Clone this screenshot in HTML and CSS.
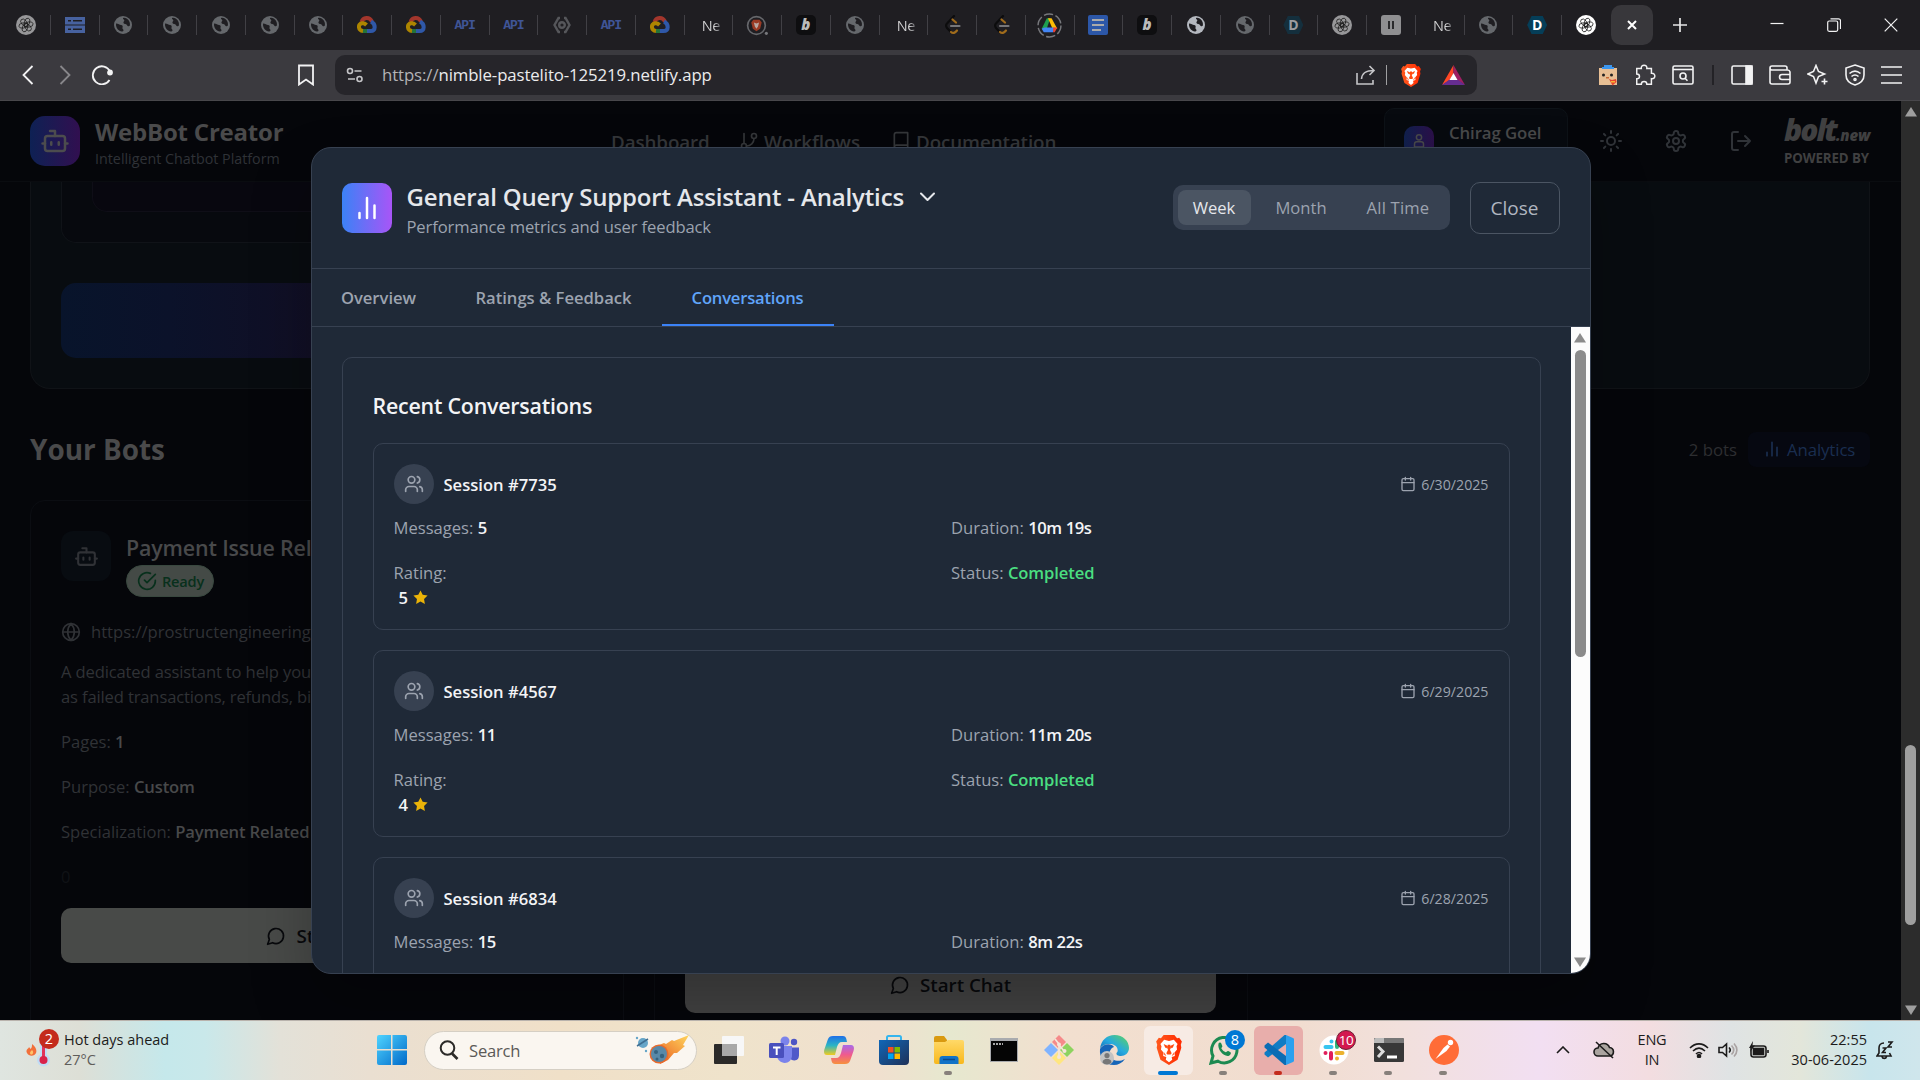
FILE: index.html
```html
<!DOCTYPE html>
<html lang="en">
<head>
<meta charset="UTF-8" />
<meta name="viewport" content="width=device-width, initial-scale=1" />
<title>WebBot Creator</title>
<link rel="stylesheet" href="styles.css">
</head>
<body>

<!-- icon definitions -->
<svg class="defs" width="0" height="0">
  <defs>
    <linearGradient id="g-win" x1="0" y1="0" x2="1" y2="1"><stop offset="0" stop-color="#4fd4ff"/><stop offset="1" stop-color="#0069c9"/></linearGradient>
    <linearGradient id="g-store" x1="0" y1="0" x2="1" y2="1"><stop offset="0" stop-color="#1067b8"/><stop offset="1" stop-color="#1f3158"/></linearGradient>
    <linearGradient id="g-folder" x1="0" y1="0" x2="0" y2="1"><stop offset="0" stop-color="#ffd968"/><stop offset="1" stop-color="#f8b81c"/></linearGradient>
    <linearGradient id="g-edge" x1="0" y1="1" x2="1" y2="0"><stop offset="0" stop-color="#0c59a4"/><stop offset=".5" stop-color="#26a9e0"/><stop offset="1" stop-color="#5fd65a"/></linearGradient>
    <linearGradient id="g-cop1" x1="0" y1="0" x2="0" y2="1"><stop offset="0" stop-color="#1f6fe8"/><stop offset=".5" stop-color="#2bb5c4"/><stop offset="1" stop-color="#f2cc1e"/></linearGradient>
    <linearGradient id="g-cop2" x1="0" y1="0" x2="0" y2="1"><stop offset="0" stop-color="#a86bea"/><stop offset=".5" stop-color="#ef5a8f"/><stop offset="1" stop-color="#f7913c"/></linearGradient>
    <linearGradient id="g-comet" x1="0" y1="1" x2="1" y2="0"><stop offset="0" stop-color="#e8531b"/><stop offset="1" stop-color="#ffd75e"/></linearGradient>
    <linearGradient id="g-brave" x1="0" y1="0" x2="1" y2="0"><stop offset="0" stop-color="#ff5a1f"/><stop offset="1" stop-color="#ff2a00"/></linearGradient>
  </defs>

  <symbol id="openai" viewBox="0 0 20 20">
    <circle cx="10" cy="10" r="10" fill="currentColor"/>
    <g fill="none" stroke="#222" stroke-width=".8"><ellipse cx="10" cy="7.2" rx="2.6" ry="4.4" transform="rotate(20 10 10)"/><ellipse cx="10" cy="7.2" rx="2.6" ry="4.4" transform="rotate(80 10 10)"/><ellipse cx="10" cy="7.2" rx="2.6" ry="4.4" transform="rotate(140 10 10)"/><ellipse cx="10" cy="7.2" rx="2.6" ry="4.4" transform="rotate(200 10 10)"/><ellipse cx="10" cy="7.2" rx="2.6" ry="4.4" transform="rotate(260 10 10)"/><ellipse cx="10" cy="7.2" rx="2.6" ry="4.4" transform="rotate(320 10 10)"/></g>
  </symbol>
  <symbol id="rack" viewBox="0 0 20 20">
    <path fill="#47629f" d="M0 2h20v7.500H0zM0 10.500h20V18H0z"/><path stroke="#1f1e22" stroke-width="1.600" d="M3 5.700h3M8 5.700h9M3 14.300h3M8 14.300h9"/>
  </symbol>
  <symbol id="earth" viewBox="0 0 20 20">
    <circle cx="10" cy="10" r="9" fill="currentColor"/>
    <path fill="#1f1e22" d="M3 8.500c2.500 0 3.500 1.500 5 1.500s2 1 1.500 2.500 1 1.500 1 3c-.5 1.300-2.500 1.200-4 .3C4 14.300 2.700 11.500 3 8.500zM10 3c2-.6 4.600.6 5.800 2.600 1 1.500 1.300 3 1.100 4.900-1 1.500-2.400.7-3-.6-.6-1.200-2.900-.5-3.400-1.900-.4-1.400 1-1.700.8-2.700C11.200 4.300 9.600 4 10 3z"/>
  </symbol>
  <symbol id="gcp" viewBox="0 0 20 20">
    <g fill="none" stroke-width="4"><path stroke="#a3362c" d="M4.500 7C6 2 12.500 1.300 15 6.500"/><path stroke="#2f58a8" d="M14 6.500c5 2.500 5 9.500-.5 9.500H10"/><path stroke="#23733a" d="M10 16H5.500"/><path stroke="#ad8500" d="M6 16C1 15.500.5 9 5 8.300c2-.3 3.500.7 4.500 1.700"/></g>
  </symbol>
  <symbol id="hexa" viewBox="0 0 20 20">
    <g fill="none" stroke="#55565a" stroke-width="2.400"><path d="M8 3H6.500L2.500 10l4 7H8M12 3h1.500l4 7-4 7H12"/><circle cx="10" cy="10" r="2.800"/></g>
  </symbol>
  <symbol id="leet" viewBox="0 0 20 20">
    <g fill="none" stroke-linecap="round" stroke-width="2.200"><path stroke="#0c0c0d" d="M12 1L5 8.500c-1 1-1 3 0 4.500l4 4"/><path stroke="#a06c1c" d="M10.500 4.500l3.500 3M9 17c2 1.800 4 1 6-1.500"/><path stroke="#77777a" d="M9 11h8.500"/></g>
  </symbol>
  <symbol id="drive" viewBox="0 0 24 24">
    <circle cx="12" cy="12" r="11" fill="none" stroke="#77787c" stroke-width="1.400" stroke-dasharray="9 2.500"/>
    <path fill="#1e9e50" d="M9.500 5h3.200L8.500 17.500 4.500 15z"/><path fill="#fbbc04" d="M10.500 5h3.500l5.500 10h-4.500z"/><path fill="#4285f4" d="M7.300 14H17l-1.500 4.500H6.500l-2-3.500z"/><path fill="#ea4335" d="M15.500 14h4l-2.500 4.500h-1.500z"/>
  </symbol>
  <symbol id="docs" viewBox="0 0 20 20">
    <rect width="20" height="20" rx="2" fill="#2c57a8"/><path stroke="#aaa" stroke-width="2" d="M4 5h12M4 10h12M4 15h9"/>
  </symbol>
  <symbol id="lion" viewBox="0 0 24 28">
    <path fill="url(#g-brave)" d="M7 0h10l2.500 3 2-.5L24 6l-1 3 .5 3-3.500 11-8 5-8-5L.5 12 1 9 0 6l2.500-3.500 2 .5z"/>
    <path fill="#fff" d="M7.500 4.500l4.500 1 4.500-1 3.500 4-1 2 .5 3-2.500 3 .5 3-3 1 .5 2.500-3 2.500-3-2.500.5-2.500-3-1 .5-3-2.500-3 .5-3-1-2z"/>
    <path fill="#ff4a10" d="M7 8.500l3.500 1.500.5 4-1.500 3 1 1.200h3l1-1.200-1.500-3 .5-4L17 8.500l-1.500 3.500L14.500 12l-1 1-.3-4h-2.400l-.3 4-1-1-1 0zM7.500 16l2 3.500-2-1zM16.500 16l-2 3.500 2-1z"/>
  </symbol>
  <symbol id="robot" viewBox="0 0 24 24"><path d="M12 8V4H8"/><rect width="16" height="12" x="4" y="8" rx="2"/><path d="M2 14h2M20 14h2M15 13v2M9 13v2"/></symbol>
  <symbol id="bars" viewBox="0 0 24 24"><path d="M18 20V10M12 20V4M6 20v-4"/></symbol>
  <symbol id="users" viewBox="0 0 24 24"><path d="M16 21v-2a4 4 0 0 0-4-4H6a4 4 0 0 0-4 4v2"/><circle cx="9" cy="7" r="4"/><path d="M22 21v-2a4 4 0 0 0-3-3.870M16 3.130a4 4 0 0 1 0 7.750"/></symbol>
  <symbol id="calendar" viewBox="0 0 24 24"><rect width="18" height="18" x="3" y="4" rx="2"/><path d="M8 2v4M16 2v4M3 10h18"/></symbol>
  <symbol id="star" viewBox="0 0 24 24"><path d="M12 2l3.090 6.260L22 9.270l-5 4.870 1.180 6.880L12 17.770l-6.180 3.250L7 14.140 2 9.270l6.910-1.010z"/></symbol>
  <symbol id="chat" viewBox="0 0 24 24"><path d="M7.900 20A9 9 0 1 0 4 16.100L2 22Z"/></symbol>
  <symbol id="globe" viewBox="0 0 24 24"><circle cx="12" cy="12" r="10"/><path d="M12 2a14.500 14.500 0 0 0 0 20 14.500 14.500 0 0 0 0-20M2 12h20"/></symbol>
</svg>

<!-- browser tabs -->
<div class="tabstrip">
  <div class="tab dim"><svg><use href="#openai"/></svg></div>
  <div class="tab"><svg><use href="#rack"/></svg></div>
  <div class="tab gray"><svg><use href="#earth"/></svg></div>
  <div class="tab gray"><svg><use href="#earth"/></svg></div>
  <div class="tab gray"><svg><use href="#earth"/></svg></div>
  <div class="tab gray"><svg><use href="#earth"/></svg></div>
  <div class="tab gray"><svg><use href="#earth"/></svg></div>
  <div class="tab"><svg><use href="#gcp"/></svg></div>
  <div class="tab"><svg><use href="#gcp"/></svg></div>
  <div class="tab api">API</div>
  <div class="tab api">API</div>
  <div class="tab"><svg><use href="#hexa"/></svg></div>
  <div class="tab api">API</div>
  <div class="tab"><svg><use href="#gcp"/></svg></div>
  <div class="tab ne">Ne</div>
  <div class="tab"><svg class="lion-tab" viewBox="0 0 24 24"><circle cx="11" cy="12" r="8.500" fill="none" stroke="#66676b" stroke-width="1.600"/><path fill="#9a3a24" d="M8 6.500h6l2 2.500-1.500 6L11 17.500 7.500 15 6 9z"/><path fill="#b9a7a3" d="M8.500 9l2.500 1 2.500-1-1 4-1.500 2L9.500 13z"/><circle cx="20.500" cy="19.500" r="1.500" fill="#77787c"/></svg></div>
  <div class="tab"><span class="fav-b">b</span></div>
  <div class="tab gray"><svg><use href="#earth"/></svg></div>
  <div class="tab ne">Ne</div>
  <div class="tab"><svg><use href="#leet"/></svg></div>
  <div class="tab"><svg><use href="#leet"/></svg></div>
  <div class="tab"><svg class="big"><use href="#drive"/></svg></div>
  <div class="tab"><svg><use href="#docs"/></svg></div>
  <div class="tab"><span class="fav-b">b</span></div>
  <div class="tab light"><svg><use href="#earth"/></svg></div>
  <div class="tab gray"><svg><use href="#earth"/></svg></div>
  <div class="tab"><span class="fav-d off">D</span></div>
  <div class="tab dim"><svg><use href="#openai"/></svg></div>
  <div class="tab"><span class="fav-pause"><i></i><i></i></span></div>
  <div class="tab ne">Ne</div>
  <div class="tab gray"><svg><use href="#earth"/></svg></div>
  <div class="tab"><span class="fav-d">D</span></div>
  <div class="tab white last"><svg><use href="#openai"/></svg></div>
  <div class="tab-active"><svg width="10" height="10" viewBox="0 0 10 10"><path d="M1 1l8 8M9 1L1 9"/></svg></div>
  <svg class="new-tab" width="14" height="14" viewBox="0 0 14 14"><path d="M7 0v14M0 7h14"/></svg>
  <div class="window-btns">
    <svg width="14" height="14" viewBox="0 0 14 14"><path d="M.5 5.500h13"/></svg>
    <svg width="14" height="14" viewBox="0 0 14 14"><rect x=".7" y="3" width="10" height="10.300" rx="1.500"/><path d="M3.500.8H11.500a2 2 0 0 1 2 2V11"/></svg>
    <svg width="14" height="14" viewBox="0 0 14 14"><path d="M.7.7l12.600 12.600M13.300.7L.7 13.300"/></svg>
  </div>
</div>

<!-- address bar -->
<div class="toolbar">
  <div class="nav-btns">
    <svg width="12" height="20" viewBox="0 0 12 20"><path d="M10.500 1L1.500 10l9 9"/></svg>
    <svg class="off" width="12" height="20" viewBox="0 0 12 20"><path d="M1.500 1l9 9-9 9"/></svg>
    <svg width="22" height="20" viewBox="0 0 22 20"><path d="M18.500 15A9 9 0 1 1 19 6.500"/><circle cx="19" cy="7.500" r="2" fill="#f2f2f3"/></svg>
  </div>
  <svg class="bookmark" width="18" height="22" viewBox="0 0 18 22"><path d="M2 1.500h14v19l-7-5-7 5z"/></svg>
  <div class="address">
    <svg class="tune" width="18" height="16" viewBox="0 0 18 16"><circle cx="4" cy="4" r="2.500"/><path d="M8.500 4h7M2 12h7"/><circle cx="13.500" cy="12" r="2.500"/></svg>
    <span class="url"><span>https://</span>nimble-pastelito-125219.netlify.app</span>
    <svg class="share" width="20" height="20" viewBox="0 0 20 20"><path d="M1 8v11h16v-4M5.500 14C6 8.500 9 5.500 18 5.500M13.500 1L18 5.500 13.500 10"/></svg>
    <i class="bar"></i>
    <svg class="shield" width="20" height="23"><use href="#lion"/></svg>
    <svg width="23" height="20" viewBox="0 0 23 20"><path fill="#ff4724" d="M11.500 0L0 20l8-5 3.500-7z"/><path fill="#9e1f63" d="M11.500 0L23 20l-8-5-3.500-7z"/><path fill="#662d91" d="M0 20h23l-7.500-5.500h-8z"/><path fill="#fff" d="M11.500 8L7.500 15h8z"/></svg>
  </div>
  <div class="extensions">
    <svg class="pet" width="20" height="22" viewBox="0 0 20 22"><path fill="#e8bf94" d="M1 4h18v17H1z"/><path fill="#3c96ee" d="M6 1h8v3H6zM4 3h12v2H4z"/><circle cx="5.500" cy="11" r="1.500" fill="#222"/><circle cx="13.500" cy="11" r="1.500" fill="#222"/><path fill="#c96a35" d="M8 13h3v1.500H8z"/><path fill="#e8452d" d="M11 15l3 1 4-1 .5 3-4 3.500z"/><path fill="#f7b733" d="M13 17h4v1.500h-4z"/></svg>
    <svg width="22" height="22" viewBox="0 0 24 24"><path d="M3 5h5c-1-5 7-5 6 0h5v5c5-.5 5 7 0 6v6h-5c0-4-6-4-6 0H3v-6c4 0 4-5 0-5z"/></svg>
    <svg width="22" height="20" viewBox="0 0 22 20"><rect x="1" y="1" width="20" height="18" rx="1.500"/><path d="M1 4.500h20"/><circle cx="11" cy="11" r="3"/><path d="M13 13.200l2.500 2.500"/></svg>
    <i class="bar"></i>
    <svg width="22" height="20" viewBox="0 0 22 20"><rect x="1" y="1" width="20" height="18" rx="1.500"/><path fill="#f2f2f3" d="M15 1h6v18h-6z"/></svg>
    <svg width="22" height="20" viewBox="0 0 22 20"><path d="M18 5V3a2 2 0 0 0-2-2H3a2 2 0 0 0 0 4h15.500A2.500 2.500 0 0 1 21 7v10a2 2 0 0 1-2 2H3a2 2 0 0 1-2-2V3M21 9.500h-8a2.500 2.500 0 0 0 0 5h8"/></svg>
    <svg width="22" height="22" viewBox="0 0 22 22"><path d="M9 1.500l2.500 6 6 2.500-6 2.500L9 19l-2.500-6.500L1 10l5.500-2.500zM17.500 14.500v6M14.500 17.500h6"/></svg>
    <svg width="20" height="22" viewBox="0 0 20 22"><path d="M10 1l9 3v7c0 5-4 8.500-9 10-5-1.500-9-5-9-10V4zM4.500 9.500c3.500-3 7.500-3 11 0M6.500 12.500c2.300-2 4.700-2 7 0"/><circle cx="10" cy="15.500" r="1"/></svg>
    <svg width="22" height="18" viewBox="0 0 22 18"><path d="M0 1h21M0 9h21M0 17h21"/></svg>
  </div>
</div>

<div class="viewport">
  <!-- page under the dialog -->
  <div class="page">
    <header class="site-header">
      <div class="logo"><svg width="30" height="30"><use href="#robot"/></svg></div>
      <div class="brand">
        <div class="brand-name">WebBot Creator</div>
        <div class="brand-sub">Intelligent Chatbot Platform</div>
      </div>
      <nav>
        <span class="n1">Dashboard</span>
        <span class="n2"><svg width="20" height="20" viewBox="0 0 24 24"><path d="M6 3v12M18 9a9 9 0 0 1-9 9"/><circle cx="18" cy="6" r="3"/><circle cx="6" cy="18" r="3"/></svg>Workflows</span>
        <span class="n3"><svg width="20" height="20" viewBox="0 0 24 24"><path d="M4 19.500v-15A2.500 2.500 0 0 1 6.500 2H20v20H6.500a2.500 2.500 0 0 1 0-5H20"/></svg>Documentation</span>
      </nav>
      <div class="user"><div class="avatar"><svg width="16" height="20" viewBox="0 0 16 20"><circle cx="8" cy="5" r="3.500"/><path d="M2 18v-4a3 3 0 0 1 3-3h6a3 3 0 0 1 3 3v4z"/></svg></div><span>Chirag Goel</span></div>
      <div class="header-icons">
        <svg width="24" height="24" viewBox="0 0 24 24"><circle cx="12" cy="12" r="4"/><path d="M12 2v2M12 20v2M4.930 4.930l1.410 1.410M17.660 17.660l1.410 1.410M2 12h2M20 12h2M6.340 17.660l-1.410 1.410M19.070 4.930l-1.410 1.410"/></svg>
        <svg width="24" height="24" viewBox="0 0 24 24"><path d="M12.220 2h-.44a2 2 0 0 0-2 2v.18a2 2 0 0 1-1 1.730l-.43.25a2 2 0 0 1-2 0l-.15-.08a2 2 0 0 0-2.730.73l-.22.38a2 2 0 0 0 .73 2.730l.15.1a2 2 0 0 1 1 1.720v.51a2 2 0 0 1-1 1.740l-.15.09a2 2 0 0 0-.73 2.730l.22.38a2 2 0 0 0 2.730.73l.15-.08a2 2 0 0 1 2 0l.43.25a2 2 0 0 1 1 1.730V20a2 2 0 0 0 2 2h.44a2 2 0 0 0 2-2v-.18a2 2 0 0 1 1-1.730l.43-.25a2 2 0 0 1 2 0l.15.08a2 2 0 0 0 2.730-.73l.22-.39a2 2 0 0 0-.73-2.730l-.15-.08a2 2 0 0 1-1-1.740v-.5a2 2 0 0 1 1-1.740l.15-.09a2 2 0 0 0 .73-2.730l-.22-.38a2 2 0 0 0-2.730-.73l-.15.08a2 2 0 0 1-2 0l-.43-.25a2 2 0 0 1-1-1.730V4a2 2 0 0 0-2-2z"/><circle cx="12" cy="12" r="3"/></svg>
        <svg width="24" height="24" viewBox="0 0 24 24"><path d="M9 21H5a2 2 0 0 1-2-2V5a2 2 0 0 1 2-2h4M16 17l5-5-5-5M21 12H9"/></svg>
      </div>
      <div class="bolt"><div class="bolt-name">bolt<span>.new</span></div><div class="bolt-by">POWERED BY</div></div>
    </header>

    <section class="builder">
      <div class="builder-inner"><div class="builder-box"></div></div>
      <div class="builder-btn"></div>
    </section>

    <div class="bots-head">
      <h2>Your Bots</h2>
      <span class="count">2 bots</span>
      <span class="analytics-link"><svg width="20" height="20"><use href="#bars"/></svg>Analytics</span>
    </div>

    <div class="bots">
      <article class="bot">
        <div class="bot-top">
          <div class="bot-icon"><svg width="25" height="25"><use href="#robot"/></svg></div>
          <div>
            <div class="bot-title">Payment Issue Related</div>
            <span class="ready"><svg width="20" height="20" viewBox="0 0 24 24"><path d="M22 11.080V12a10 10 0 1 1-5.930-9.140M22 4L12 14.010l-3-3"/></svg>Ready</span>
          </div>
        </div>
        <div class="bot-url"><svg width="20" height="20"><use href="#globe"/></svg>https://prostructengineering.com</div>
        <p class="bot-desc">A dedicated assistant to help you with issues such<br>as failed transactions, refunds, billing</p>
        <div class="bot-row">Pages: <b>1</b></div>
        <div class="bot-row">Purpose: <b>Custom</b></div>
        <div class="bot-row">Specialization: <b>Payment Related</b></div>
        <div class="bot-row zero">0</div>
        <div class="start"><svg width="20" height="20"><use href="#chat"/></svg>Start Chat</div>
      </article>
      <article class="bot second">
        <div class="start"><svg width="20" height="20"><use href="#chat"/></svg>Start Chat</div>
      </article>
    </div>
  </div>

  <div class="page-scroll">
    <svg width="12" height="10" viewBox="0 0 12 10"><path d="M6 0l6 9.500H0z"/></svg>
    <div class="thumb"></div>
    <svg width="12" height="10" viewBox="0 0 12 10"><path d="M6 10L0 .5h12z"/></svg>
  </div>

  <!-- analytics dialog -->
  <div class="modal">
    <div class="modal-head">
      <div class="modal-icon"><svg width="30" height="30"><use href="#bars"/></svg></div>
      <div class="modal-titles">
        <div class="modal-title">General Query Support Assistant - Analytics <svg width="15" height="10" viewBox="0 0 15 10"><path d="M1 1.500l6.500 6.500L14 1.500"/></svg></div>
        <div class="modal-sub">Performance metrics and user feedback</div>
      </div>
      <div class="range"><span class="on">Week</span><span>Month</span><span>All Time</span></div>
      <button class="close">Close</button>
    </div>
    <div class="modal-tabs">
      <span class="t1">Overview</span>
      <span class="t2">Ratings &amp; Feedback</span>
      <span class="t3 active">Conversations</span>
    </div>
    <div class="modal-body">
      <div class="scroll-area">
        <div class="panel">
          <h3>Recent Conversations</h3>

          <div class="session">
            <div class="session-head">
              <div class="circle"><svg width="20" height="20"><use href="#users"/></svg></div>
              <span class="session-name">Session #7735</span>
              <span class="date"><svg width="16" height="16"><use href="#calendar"/></svg>6/30/2025</span>
            </div>
            <div class="session-grid">
              <div>Messages: <b>5</b></div>
              <div>Duration: <b>10m 19s</b></div>
              <div>Rating:<div class="stars"><b>5</b><svg width="17" height="17"><use href="#star"/></svg></div></div>
              <div>Status: <b class="done">Completed</b></div>
            </div>
          </div>

          <div class="session">
            <div class="session-head">
              <div class="circle"><svg width="20" height="20"><use href="#users"/></svg></div>
              <span class="session-name">Session #4567</span>
              <span class="date"><svg width="16" height="16"><use href="#calendar"/></svg>6/29/2025</span>
            </div>
            <div class="session-grid">
              <div>Messages: <b>11</b></div>
              <div>Duration: <b>11m 20s</b></div>
              <div>Rating:<div class="stars"><b>4</b><svg width="17" height="17"><use href="#star"/></svg></div></div>
              <div>Status: <b class="done">Completed</b></div>
            </div>
          </div>

          <div class="session">
            <div class="session-head">
              <div class="circle"><svg width="20" height="20"><use href="#users"/></svg></div>
              <span class="session-name">Session #6834</span>
              <span class="date"><svg width="16" height="16"><use href="#calendar"/></svg>6/28/2025</span>
            </div>
            <div class="session-grid">
              <div>Messages: <b>15</b></div>
              <div>Duration: <b>8m 22s</b></div>
            </div>
          </div>
        </div>
      </div>
      <div class="modal-scroll">
        <svg width="12" height="10" viewBox="0 0 12 10"><path d="M6 0l6 9.500H0z"/></svg>
        <div class="thumb"></div>
        <svg width="12" height="10" viewBox="0 0 12 10"><path d="M6 10L0 .5h12z"/></svg>
      </div>
    </div>
  </div>
</div>

<!-- taskbar -->
<footer class="taskbar">
  <div class="weather">
    <div class="weather-icon">
      <svg width="34" height="36" viewBox="0 0 34 36"><path fill="#f2703a" d="M6 12c4 3 5 6 4 9s-7 4-9 0 2-4 2-6l1.500 2C6 16 6 14 6 12z"/><path fill="#ffc46b" d="M6 18c2 2 1 4.500-.5 4.500S3 20.500 6 18z"/><rect x="14" y="6" width="7" height="22" rx="3.500" fill="#bfdcf5"/><circle cx="17.500" cy="28" r="6.500" fill="#bfdcf5"/><path stroke="#e0335a" stroke-width="3" d="M17.500 12v16"/><circle cx="17.500" cy="28" r="4" fill="#d9224a"/></svg>
      <span class="badge red">2</span>
    </div>
    <div><div class="hot">Hot days ahead</div><div class="temp">27°C</div></div>
  </div>

  <div class="apps">
    <svg class="win" width="30" height="30" viewBox="0 0 30 30"><path fill="url(#g-win)" d="M2 0h12v14H0V2a2 2 0 0 1 2-2zM15.500 0H28a2 2 0 0 1 2 2v12H15.500zM0 15.500h14V30H2a2 2 0 0 1-2-2zM15.500 15.500H30V28a2 2 0 0 1-2 2H15.500z"/></svg>
    <div class="search">
      <svg width="20" height="20" viewBox="0 0 20 20"><circle cx="8.500" cy="8" r="6.800" fill="none" stroke="#2b2a28" stroke-width="2"/><path stroke="#2b2a28" stroke-width="2.600" d="M13 13.500l5.500 5.500"/></svg>
      <span>Search</span>
      <svg width="58" height="30" viewBox="0 0 58 30"><path fill="url(#g-comet)" d="M20 12l10-4 2 1 6-4 2 1 15-6-6 10 2 1-8 7h-3l-6 7-8 4z"/><circle cx="25" cy="19" r="9.500" fill="#e86a2c"/><circle cx="25" cy="19" r="8" fill="#5989a8"/><circle cx="22" cy="17" r="2" fill="#36627f"/><circle cx="28" cy="21" r="2.200" fill="#36627f"/><circle cx="23" cy="24" r="1.500" fill="#36627f"/><circle cx="9" cy="8" r="5" fill="#66a5c8"/><path stroke="#3f6f92" stroke-width="1.500" d="M3 11L14 4"/><circle cx="3" cy="3" r="1.200" fill="#66a5c8"/><circle cx="12" cy="16" r="1.200" fill="#66a5c8"/></svg>
    </div>
    <div class="app"><svg width="30" height="30" viewBox="0 0 30 30"><rect x="0" y="9" width="23" height="20" rx="1" fill="#2b2a29"/><rect x="8" y="1" width="22" height="20" rx="1" fill="#f7f7f7"/><path fill="#a8a8a8" d="M8 9h15v12H8z"/></svg></div>
    <div class="app"><svg width="30" height="30" viewBox="0 0 30 30"><circle cx="16" cy="6" r="4.500" fill="#7b83eb"/><circle cx="25" cy="7" r="3.200" fill="#4e56c4"/><path fill="#5059c9" d="M22 12.500h8v7c0 6-4 7-8 5z"/><path fill="#7b83eb" d="M8 11h15v9c0 11-15 10-15 0z"/><rect y="8" width="15" height="15" rx="1.500" fill="#4950bd"/><path stroke="#fff" stroke-width="2" d="M4 12.500h7.500M7.700 12.500V20"/></svg></div>
    <div class="app"><svg width="30" height="28" viewBox="0 0 30 28"><path fill="url(#g-cop1)" d="M9 0h10c3 0 3.500 3 4 6h-5c-3 0-4 2-5 5l-2 8H3c-3 0-3.500-3-2.500-6L4 3c1-2 2-3 5-3z"/><path fill="url(#g-cop2)" d="M21 28H11c-3 0-3.500-3-4-6h5c3 0 4-2 5-5l2-8h8c3 0 3.500 3 2.500 6L26 25c-1 2-2 3-5 3z"/></svg></div>
    <div class="app"><svg width="30" height="30" viewBox="0 0 30 30"><path fill="none" stroke="#35b5ee" stroke-width="2" d="M8 6V2.500A1.500 1.500 0 0 1 9.500 1h11A1.500 1.500 0 0 1 22 2.500V6"/><path fill="url(#g-store)" d="M0 5h30v21a4 4 0 0 1-4 4H4a4 4 0 0 1-4-4z"/><path fill="#f25022" d="M9 12h5.500v5.500H9z"/><path fill="#7fba00" d="M15.500 12H21v5.500h-5.500z"/><path fill="#00a4ef" d="M9 18.500h5.500V24H9z"/><path fill="#ffb900" d="M15.500 18.500H21V24h-5.500z"/></svg></div>
    <div class="app run"><svg width="30" height="28" viewBox="0 0 30 28"><path fill="#d99a10" d="M0 2a2 2 0 0 1 2-2h8l3 4v6H0z"/><path fill="url(#g-folder)" d="M0 6h11l3-2h14a2 2 0 0 1 2 2v20a2 2 0 0 1-2 2H2a2 2 0 0 1-2-2z"/><path fill="#1173c7" d="M5.500 28v-5a3 3 0 0 1 3-3h13a3 3 0 0 1 3 3v5z"/><path stroke="#0a4a8c" stroke-width="1.500" d="M9 23.500h12"/></svg></div>
    <div class="app"><svg width="28" height="24" viewBox="0 0 28 24"><rect width="28" height="24" fill="#a9abae"/><rect x="1" y="3" width="26" height="20" fill="#050505"/><path stroke="#ddd" stroke-width="1.300" stroke-dasharray="2 1" d="M3 6h10"/></svg></div>
    <div class="app"><svg width="30" height="30" viewBox="0 0 30 30"><path fill="#f58a8a" d="M15 0l7 7-7 7-7-7z"/><path fill="#80b3ff" d="M7 8l7 7-7 7-7-7z"/><path fill="#8dd35f" d="M23 8l7 7-7 7-7-7z"/><path fill="#ffe680" d="M15 16l7 7-7 7-7-7z"/><g fill="none" stroke="#f5e6da" stroke-width="1.700"><path d="M11 4l4 5v13M15 10l5 6"/></g><circle cx="15" cy="9.500" r="2" fill="#f5e6da"/><circle cx="15" cy="22" r="2" fill="#f5e6da"/><circle cx="20.500" cy="16" r="2" fill="#f5e6da"/></svg></div>
    <div class="app"><svg width="30" height="30" viewBox="0 0 30 30"><path fill="url(#g-edge)" d="M1 14C2 5 8 0 15.500 0 24 0 30 6 30 13c0 5-4 8-8 8-3 0-5-1-4.500-3 1-1 1.500-2 1-4-.5-3-4-5-8-5C6 9 2 11 1 14z"/><path fill="#1565b8" d="M1 14c3-6 12-6 14-2-3 1-5 4-4 8 1 5 8 8 15 4-3 4-7 6-11 6C6 30 0 23 1 14z"/><circle cx="8" cy="23" r="7" fill="#c3c3c3"/><circle cx="8" cy="20.500" r="2.600" fill="#777"/><path fill="#777" d="M3.500 27.500c0-5 9-5 9 0-2 2.500-7 2.500-9 0z"/></svg></div>
    <div class="app run tile blue"><svg width="26" height="30"><use href="#lion"/></svg></div>
    <div class="app run"><svg width="30" height="30" viewBox="0 0 30 30"><path fill="none" stroke="#1c8a51" stroke-width="3" d="M2 28l2-7A12.700 12.700 0 1 1 9 26.200z"/><path fill="#1c8a51" d="M9.500 8.500c1-1.500 2.500-1 3 .5l.8 2c.3 1-.8 1.500-1 2.300 1 2 2.500 3.300 4.500 4 1-.5 1.500-1.800 2.500-1.300l2.200 1.200c1 .8 0 3-1.500 3.500-5 1.500-12-6-10.500-12.200z"/></svg><span class="badge blue">8</span></div>
    <div class="app run tile pink"><svg width="30" height="30" viewBox="0 0 30 30"><path fill="#0f7cc4" d="M22 0v9L4 22.500 .5 19.500v-2L20.500 0z"/><path fill="#0a6cb4" d="M22 30v-9L4 7.500.5 10.500v2L20.500 30z"/><path fill="#2ba0ee" d="M22 0l7 3a1.500 1.500 0 0 1 1 1.500v21a1.500 1.500 0 0 1-1 1.500l-7 3z"/></svg></div>
    <div class="app run"><svg width="30" height="30" viewBox="0 0 30 30"><circle cx="15" cy="15" r="14.500" fill="#fff"/><g stroke-width="4" stroke-linecap="round" fill="none"><path stroke="#36c5f0" d="M12.500 6.500v.1M6.500 12h6"/><path stroke="#2eb67d" d="M18 6.500v5.500M23.500 12v.1"/><path stroke="#ecb22e" d="M17.500 18h6M18 23.500v.1"/><path stroke="#e01e5a" d="M12 18v5.500M6.500 18v.1"/></g></svg><span class="badge crimson">10</span></div>
    <div class="app run"><svg width="30" height="24" viewBox="0 0 30 24"><rect width="30" height="24" rx="1.500" fill="#383838"/><path fill="#777" d="M1.500 0h27A1.500 1.500 0 0 1 30 1.500V5H0V1.500A1.500 1.500 0 0 1 1.500 0z"/><path fill="#bbb" d="M1.500 0H10v5H0V1.500z"/><path fill="none" stroke="#ddd" stroke-width="3" d="M4 8.500l5 5-5 5.500"/><path stroke="#fff" stroke-width="3" d="M13 19h10"/></svg></div>
    <div class="app run"><svg width="30" height="30" viewBox="0 0 30 30"><circle cx="15" cy="15" r="15" fill="#ff6c37"/><path fill="#fff" d="M6.500 24l8-11 4-3.500 2.500 2L17.500 16z"/><circle cx="21.500" cy="7.500" r="2.700" fill="#fff"/></svg></div>
  </div>

  <div class="tray">
    <svg class="chev" width="14" height="8" viewBox="0 0 14 8"><path d="M1 7l6-6 6 6"/></svg>
    <svg class="cloud" width="22" height="18" viewBox="0 0 22 18"><path fill="#aaa49f" d="M5 15a4 4 0 0 1 0-8 6 6 0 0 1 11.500-.5A4.300 4.300 0 0 1 17 15z"/><path d="M3 1l17 16"/></svg>
    <div class="lang">ENG<br>IN</div>
    <svg class="wifi" width="20" height="16" viewBox="0 0 20 16"><path d="M1 6c5.500-5.500 12.500-5.500 18 0M4 9c4-3.800 8-3.800 12 0M7 12c2-2 4-2 6 0"/><circle cx="10" cy="14" r="1.500" fill="#1c1b1b"/></svg>
    <svg class="vol" width="20" height="16" viewBox="0 0 20 16"><path d="M1 5.500v5h3.500L8.500 14V2L4.500 5.500zM11 5.500c1.500 1.500 1.500 3.500 0 5"/><path stroke="#aaa3a3" d="M13.500 3.500c3 3 3 6 0 9M16 1.500c4 4.500 4 8.500 0 13"/></svg>
    <svg class="batt" width="20" height="18" viewBox="0 0 20 18"><rect x="2" y="5" width="15" height="11" rx="2.500"/><rect x="4.500" y="7.500" width="10" height="6" fill="#1c1b1b"/><path d="M19 9v3"/><path fill="#1c1b1b" stroke="none" d="M4 0L0 7h2.500L1 11l5-6.500H3.500z"/></svg>
    <div class="clock">22:55<br>30-06-2025</div>
    <svg class="bell" width="18" height="20" viewBox="0 0 18 20"><path d="M8 3C4.500 3 3 5.500 3 8v5l-2 3h14l-1.500-3M6 16.500c.5 2.500 4 2.500 4.500 0M6.500 8h3.500l-3.500 4.500h3.500M12 2h4l-4 5h4"/></svg>
  </div>
</footer>

</body>
</html>
```
FILE: styles.css
```css
* {
  box-sizing: border-box;
}
body {
  margin: 0;
  width: 1920px;
  height: 1080px;
  overflow: hidden;
  display: flex;
  flex-direction: column;
  font-family: "Open Sans", "Noto Sans", sans-serif;
  background: #05060a;
}
svg {
  display: block;
  flex: none;
}
.defs {
  position: absolute;
}

/* tabs */
.tabstrip {
  height: 50px;
  flex: none;
  background: #1f1e22;
  display: flex;
  align-items: center;
  padding-left: 2px;
}
.tab {
  width: 48.75px;
  height: 20px;
  display: flex;
  align-items: center;
  justify-content: center;
  border-right: 1px solid #414045;
  flex: none;
}
.tab.last {
  border-color: transparent;
}
.tab svg {
  width: 20px;
  height: 20px;
}
.tab svg.big, .tab svg.lion-tab {
  width: 25px;
  height: 25px;
}
.tab.dim { color: #979799; }
.tab.gray { color: #65686c; }
.tab.light { color: #b4b8bf; }
.tab.white { color: #fff; }
.tab.api {
  font-family: "Liberation Mono", monospace;
  font-weight: bold;
  font-size: 13px;
  letter-spacing: -1px;
  color: #3f5596;
}
.tab.ne {
  font-size: 14.5px;
  letter-spacing: -0.3px;
  padding-left: 5px;
  color: transparent;
  background: linear-gradient(90deg, #d5d5d6 62%, #55555a 76%);
  background-clip: text;
}
.fav-b {
  width: 20px;
  height: 20px;
  border-radius: 5px;
  background: #0e0e10;
  color: #bbb;
  font: italic 900 15px/19px "Open Sans", sans-serif;
  text-align: center;
}
.fav-d {
  width: 20px;
  height: 18px;
  background: #053e58;
  clip-path: polygon(22% 0, 78% 0, 100% 50%, 78% 100%, 22% 100%, 0 50%);
  color: #fff;
  font: bold 14px/18px "Open Sans", sans-serif;
  text-align: center;
}
.fav-d.off {
  background: #142f3d;
  color: #9b9da0;
}
.fav-pause {
  width: 20px;
  height: 20px;
  border-radius: 3px;
  background: #8f8f91;
  display: flex;
  gap: 2px;
  justify-content: center;
  align-items: center;
}
.fav-pause i {
  width: 2px;
  height: 8px;
  background: #2a2a2c;
}
.tab-active {
  width: 42px;
  height: 40px;
  border-radius: 10px;
  background: #38373b;
  display: flex;
  align-items: center;
  justify-content: center;
}
.tab-active svg {
  stroke: #fff;
  stroke-width: 2;
}
.new-tab {
  stroke: #e5e5e6;
  stroke-width: 1.7;
  margin-left: 20px;
}
.window-btns {
  display: flex;
  gap: 43px;
  margin: 0 22px 0 auto;
  fill: none;
  stroke: #f2f2f3;
  stroke-width: 1.2;
}

/* address bar */
.toolbar {
  height: 51px;
  flex: none;
  background: #3b3a3f;
  border-bottom: 1px solid #48474b;
  display: flex;
  align-items: center;
  fill: none;
  stroke: #f2f2f3;
  stroke-width: 1.8;
}
.nav-btns {
  display: flex;
  gap: 25px;
  padding-left: 22px;
}
.nav-btns svg:last-child {
  margin-left: -5px;
}
.nav-btns .off {
  stroke: #88878b;
}
.bookmark {
  margin-left: 184px;
}
.address {
  width: 1142px;
  height: 40px;
  margin-left: 20px;
  border-radius: 10px;
  background: #26252a;
  display: flex;
  align-items: center;
  padding: 0 12px 0 11px;
  stroke: none;
}
.tune, .share {
  stroke: #c5c5c8;
  stroke-width: 1.6;
}
.url {
  margin-left: 18px;
  padding-bottom: 2px;
  font-size: 16.8px;
  color: #ececee;
  letter-spacing: -0.1px;
}
.url span {
  color: #b4b4b7;
}
.share {
  margin-left: auto;
}
.address .bar {
  width: 1px;
  height: 20px;
  margin: 0 14px 0 10px;
  background: #a0a0a2;
}
.shield {
  margin-right: 21px;
}
.extensions {
  display: flex;
  align-items: center;
  gap: 16px;
  margin: 0 17px 0 auto;
  stroke-width: 1.6;
}
.extensions .bar {
  width: 2px;
  height: 20px;
  background: #232226;
  margin: 0 1px 0 2px;
}
.pet {
  stroke: none;
}

/* page */
.viewport {
  position: relative;
  height: 919px;
  flex: none;
  display: flex;
  overflow: hidden;
}
.page {
  width: 1901px;
  height: 919px;
  overflow: hidden;
  background: #05060a;
  color: #4a4a4b;
}
.page svg {
  fill: none;
  stroke: currentColor;
  stroke-width: 2;
  stroke-linecap: round;
  stroke-linejoin: round;
}
.site-header {
  height: 81px;
  border-bottom: 1px solid #0a0c10;
  display: flex;
  align-items: center;
  padding: 0 31px 0 30px;
}
.logo {
  width: 50px;
  height: 50px;
  border-radius: 15px;
  background: linear-gradient(90deg, #0e2154, #310f50);
  display: flex;
  align-items: center;
  justify-content: center;
  color: #4c4c4e;
}
.brand {
  margin-left: 15px;
  width: 200px;
  padding-top: 4px;
}
.brand-name {
  font-size: 24px;
  font-weight: 700;
  letter-spacing: -0.2px;
  line-height: 30px;
}
.brand-sub {
  font-size: 14.3px;
  line-height: 23px;
  color: #2f3237;
}
nav {
  display: flex;
  font-size: 18.8px;
  font-weight: 600;
  color: #343639;
  margin-left: 316px;
  padding-top: 2px;
  width: 774px;
}
nav span {
  display: flex;
  align-items: center;
  gap: 5px;
}
nav svg {
  margin-bottom: 2px;
}
.n1 { width: 128px; letter-spacing: -0.1px; }
.n2 { width: 152px; }
.n3 { letter-spacing: -0.1px; }
.user {
  width: 184px;
  height: 66px;
  border: 1px solid #0d1217;
  border-radius: 10px;
  background: #070a0f;
  display: flex;
  padding: 13px 19px;
  align-self: flex-start;
  margin: 7px 0 0 -1px;
  font-size: 16.8px;
  line-height: 22px;
  font-weight: 600;
  letter-spacing: -0.1px;
  color: #48494a;
}
.avatar {
  width: 30px;
  height: 30px;
  margin: 4px 15px 0 0;
  border-radius: 10px;
  background: linear-gradient(90deg, #10204d, #2b1049);
  display: flex;
  align-items: center;
  justify-content: center;
}
.avatar svg {
  width: 12px;
}
.header-icons {
  display: flex;
  gap: 41px;
  margin-left: 31px;
  color: #303338;
}
.bolt {
  margin-left: auto;
  width: 86px;
  color: #404041;
  white-space: nowrap;
}
.bolt-name {
  font-size: 30px;
  line-height: 30px;
  font-weight: 800;
  font-style: italic;
  letter-spacing: -2px;
}
.bolt-name span {
  font-size: 15px;
  letter-spacing: -0.2px;
}
.bolt-by {
  font-size: 13.3px;
  line-height: 17px;
  font-weight: 700;
  letter-spacing: -0.1px;
}

.builder {
  margin: 0 31px 0 30px;
  height: 207px;
  background: #080c10;
  border: 1px solid #101317;
  border-top: 0;
  border-radius: 0 0 20px 20px;
  padding: 0 30px;
}
.builder-inner {
  width: 900px;
  height: 61px;
  border: 1px solid #101318;
  border-top: 0;
  border-radius: 0 0 15px 15px;
  background: #07090e;
  padding: 0 30px;
}
.builder-box {
  height: 30px;
  border: 1px solid #0f0e17;
  border-top: 0;
  border-radius: 0 0 15px 15px;
  background: #08070f;
}
.builder-btn {
  width: 900px;
  height: 75px;
  margin-top: 40px;
  border-radius: 15px;
  background: linear-gradient(90deg, #08142b, #0b122a 12%, #110f25 28%, #150a2c);
}
.bots-head {
  display: flex;
  align-items: center;
  height: 40px;
  margin: 40px 31px 31px 30px;
}
.bots-head h2 {
  margin: 0;
  font-size: 27.9px;
  font-weight: 700;
}
.count {
  margin-left: auto;
  font-size: 16.8px;
  color: #2d2e31;
}
.analytics-link {
  display: flex;
  align-items: center;
  gap: 5px;
  width: 122px;
  height: 35px;
  margin-left: 11px;
  padding-left: 14px;
  border-radius: 8px;
  background: #060811;
  color: #1a2e50;
  font-size: 16.8px;
  letter-spacing: -0.1px;
}
.bots {
  display: flex;
  gap: 30px;
  padding-left: 30px;
}
.bot {
  width: 594px;
  height: 640px;
  border: 1px solid #0b0d12;
  border-radius: 15px;
  padding: 30px;
  font-size: 16.6px;
  color: #303236;
}
.bot-top {
  display: flex;
  gap: 15px;
}
.bot-icon {
  width: 50px;
  height: 50px;
  border-radius: 12px;
  background: #080c11;
  display: flex;
  align-items: center;
  justify-content: center;
}
.bot-title {
  font-size: 21.4px;
  line-height: 34px;
  letter-spacing: -0.15px;
  font-weight: 600;
  color: #48494a;
  white-space: nowrap;
}
.ready {
  display: flex;
  align-items: center;
  gap: 5px;
  width: 88px;
  height: 32px;
  margin-top: 0;
  padding-left: 10px;
  border: 1px solid #39483f;
  border-radius: 16px;
  background: #444a46;
  color: #08301c;
  font-size: 14.6px;
  font-weight: 600;
  letter-spacing: -0.2px;
}
.bot-url {
  display: flex;
  align-items: center;
  gap: 10px;
  height: 25px;
  margin-top: 22px;
}
.bot-desc {
  margin: 15px 0 20px;
  line-height: 25px;
  letter-spacing: -0.15px;
}
.bot-row {
  line-height: 25px;
  margin-bottom: 20px;
}
.bot-row b {
  font-weight: 600;
  letter-spacing: -0.15px;
  color: #48494a;
}
.bot-row.zero {
  color: #101216;
  margin-bottom: 19px;
}
.start {
  height: 55px;
  border-radius: 10px;
  background: #484a48;
  color: #08090c;
  display: flex;
  align-items: center;
  justify-content: center;
  gap: 10px;
  font-size: 18.8px;
  font-weight: 600;
}
.second {
  padding-top: 456px;
}
.second .start {
  height: 56px;
  width: 531px;
  background: #434343;
}

.page-scroll {
  width: 19px;
  background: #2c2c2c;
  display: flex;
  flex-direction: column;
  align-items: center;
  padding: 6px 0 5px;
  fill: #9f9f9f;
}
.page-scroll .thumb {
  width: 11px;
  height: 180px;
  margin: 628px 0 auto;
  border-radius: 6px;
  background: #9f9f9f;
}

/* dialog */
.modal {
  position: absolute;
  left: 310.5px;
  top: 46px;
  width: 1280px;
  height: 827px;
  display: flex;
  flex-direction: column;
  background: #1f2937;
  border: 1px solid #374151;
  border-radius: 20px;
  overflow: hidden;
  box-shadow: 0 30px 60px rgba(0,0,0,0.25);
  color: #9ca3af;
  font-size: 16.6px;
}
.modal svg {
  fill: none;
  stroke: currentColor;
  stroke-width: 2;
  stroke-linecap: round;
  stroke-linejoin: round;
}
.modal-head {
  height: 121px;
  flex: none;
  padding: 0 30px;
  border-bottom: 1px solid #374151;
  display: flex;
  align-items: center;
}
.modal-icon {
  width: 50px;
  height: 50px;
  border-radius: 10px;
  background: linear-gradient(90deg, #3b82f6, #a855f7);
  color: #fff;
  display: flex;
  align-items: center;
  justify-content: center;
}
.modal-titles {
  margin-left: 15px;
}
.modal-title {
  display: flex;
  align-items: center;
  gap: 16px;
  font-size: 24px;
  letter-spacing: -0.16px;
  line-height: 35px;
  padding-top: 2px;
  font-weight: 600;
  color: #e5e7eb;
}
.modal-sub {
  line-height: 25px;
  letter-spacing: -0.13px;
}
.range {
  display: flex;
  margin-left: auto;
  width: 277px;
  height: 45px;
  padding: 5px;
  margin-bottom: 1px;
  border-radius: 10px;
  background: #374151;
}
.range span {
  border-radius: 8px;
  line-height: 36px;
  width: 101px;
  text-align: center;
}
.range span:last-child {
  width: 93px;
  letter-spacing: 0.2px;
}
.range .on {
  width: 73px;
  background: #4b5563;
  color: #e5e7eb;
}
.close {
  width: 90px;
  height: 52px;
  margin-left: 20px;
  border: 1px solid #4b5563;
  border-radius: 10px;
  background: none;
  color: #b0b6c0;
  font-family: inherit;
  font-size: 19px;
}
.modal-tabs {
  height: 58px;
  flex: none;
  display: flex;
  border-bottom: 1px solid #374151;
  font-weight: 600;
  line-height: 58px;
}
.modal-tabs span {
  text-align: center;
  height: 57px;
  letter-spacing: -0.2px;
}
.modal-tabs .t1 { width: 134px; letter-spacing: 0; }
.modal-tabs .t2 { width: 216px; letter-spacing: 0; }
.t3 { width: 172px; }
.modal-tabs .active {
  color: #60a5fa;
  border-bottom: 2px solid #3b82f6;
}
.modal-body {
  flex: 1;
  min-height: 0;
  display: flex;
}
.scroll-area {
  flex: 1;
  overflow: hidden;
  padding: 30px;
}
.panel {
  border: 1px solid #374151;
  border-radius: 10px;
  height: 1000px;
  padding: 30px;
}
.panel h3 {
  margin: 0 0 20px;
  font-size: 21.4px;
  letter-spacing: -0.22px;
  line-height: 35px;
  font-weight: 600;
  color: #f3f4f6;
}
.session {
  height: 187px;
  margin-bottom: 20px;
  padding: 20px;
  border: 1px solid #374151;
  border-radius: 10px;
}
.session-head {
  display: flex;
  align-items: center;
  gap: 10px;
}
.circle {
  width: 40px;
  height: 40px;
  border-radius: 50%;
  background: #374151;
  display: flex;
  align-items: center;
  justify-content: center;
}
.session-name {
  font-weight: 600;
  color: #f3f4f6;
}
.date {
  display: flex;
  align-items: center;
  gap: 5px;
  margin-left: auto;
  font-size: 14.2px;
}
.session-grid {
  display: grid;
  grid-template-columns: 1fr 1fr;
  gap: 20px;
  margin-top: 11px;
  line-height: 25px;
}
.session-grid b {
  font-weight: 600;
  letter-spacing: -0.4px;
  color: #f3f4f6;
}
.session-grid .done {
  letter-spacing: -0.1px;
  color: #4ade80;
}
.stars {
  display: flex;
  align-items: center;
  gap: 4px;
  padding-left: 5px;
  height: 24px;
}
.stars svg {
  fill: #eab308;
  stroke: none;
}
.modal-scroll {
  width: 19px;
  background: #fcfcfc;
  display: flex;
  flex-direction: column;
  align-items: center;
  padding: 6px 0;
}
.modal-scroll svg {
  fill: #8b8b8b;
  stroke: none;
}
.modal-scroll .thumb {
  width: 11px;
  height: 307px;
  margin: 7px 0 auto;
  border-radius: 6px;
  background: #8b8b8b;
}

/* taskbar */
.taskbar {
  height: 60px;
  flex: none;
  display: flex;
  align-items: center;
  padding-bottom: 1px;
  border-top: 1px solid #b9b3ad;
  color: #1c1b1b;
  font-size: 14.5px;
  background: linear-gradient(90deg, #dfe5e0 0, #dddfd6 80px, #c5e8eb 165px, #c9e8ea 205px, #e3e1d8 280px, #eadfd1 370px, #f0e0c8 560px, #efe3cb 730px, #f0e0cf 880px, #e6e8cf 950px, #f2dfcf 1060px, #f1ddd0 1300px, #f2e0dc 1400px, #f2dff2 1540px, #f3dde0 1650px, #dfe3e4 1730px, #e3e6da 1800px, #c8e5ec 1870px, #cfe6ec 1920px);
}
.weather {
  display: flex;
  align-items: center;
  width: 377px;
  padding-left: 26px;
}
.weather-icon {
  position: relative;
  margin-right: 4px;
}
.badge {
  position: absolute;
  border-radius: 50%;
  color: #fff;
  text-align: center;
}
.badge.red {
  left: 13px;
  top: -3px;
  width: 20px;
  height: 20px;
  line-height: 20px;
  background: #c42b1c;
}
.hot, .temp {
  line-height: 20px;
}
.temp {
  color: #5f5d5a;
}
.apps {
  display: flex;
  align-items: center;
}
.search {
  width: 273px;
  height: 39px;
  margin: 0 4px 0 17px;
  padding: 0 4px 0 14px;
  border: 1px solid #d5cfc4;
  border-radius: 20px;
  background: #faf6f0;
  display: flex;
  align-items: center;
  font-size: 16.6px;
  color: #5c5a57;
}
.search span {
  margin: 0 auto 0 10px;
  letter-spacing: -0.2px;
}
.app {
  position: relative;
  width: 49px;
  height: 49px;
  margin: 0 3px;
  display: flex;
  align-items: center;
  justify-content: center;
  border-radius: 6px;
}
.run::after {
  content: "";
  position: absolute;
  bottom: 0;
  left: 20px;
  width: 8px;
  height: 4px;
  border-radius: 2px;
  background: #87807b;
}
.tile {
  background: #f7ebe4;
}
.tile.pink {
  background: #e8aeab;
}
.tile.blue::after {
  left: 14px;
  width: 20px;
  background: #0078d4;
}
.tile.pink::after {
  background: #c42b1c;
}
.badge.blue {
  left: 26px;
  top: 4px;
  width: 20px;
  height: 20px;
  line-height: 20px;
  background: #0078d4;
}
.badge.crimson {
  left: 27px;
  top: 4px;
  width: 20px;
  height: 20px;
  line-height: 18px;
  font-size: 13.5px;
  letter-spacing: -0.5px;
  border: 1px solid #6b2034;
  background: #d3194f;
}
.tray {
  display: flex;
  align-items: center;
  margin: 0 26px 0 auto;
  fill: none;
  stroke: #1c1b1b;
  stroke-width: 1.6;
}
.cloud { margin-left: 23px; }
.lang {
  width: 30px;
  margin-left: 22px;
  line-height: 20px;
  text-align: center;
  letter-spacing: -0.2px;
}
.wifi { margin-left: 22px; }
.vol { margin-left: 9px; }
.batt { margin-left: 11px; }
.clock {
  width: 80px;
  margin-left: 18px;
  line-height: 20px;
  text-align: right;
  white-space: nowrap;
}
.bell { margin-left: 9px; }
```
